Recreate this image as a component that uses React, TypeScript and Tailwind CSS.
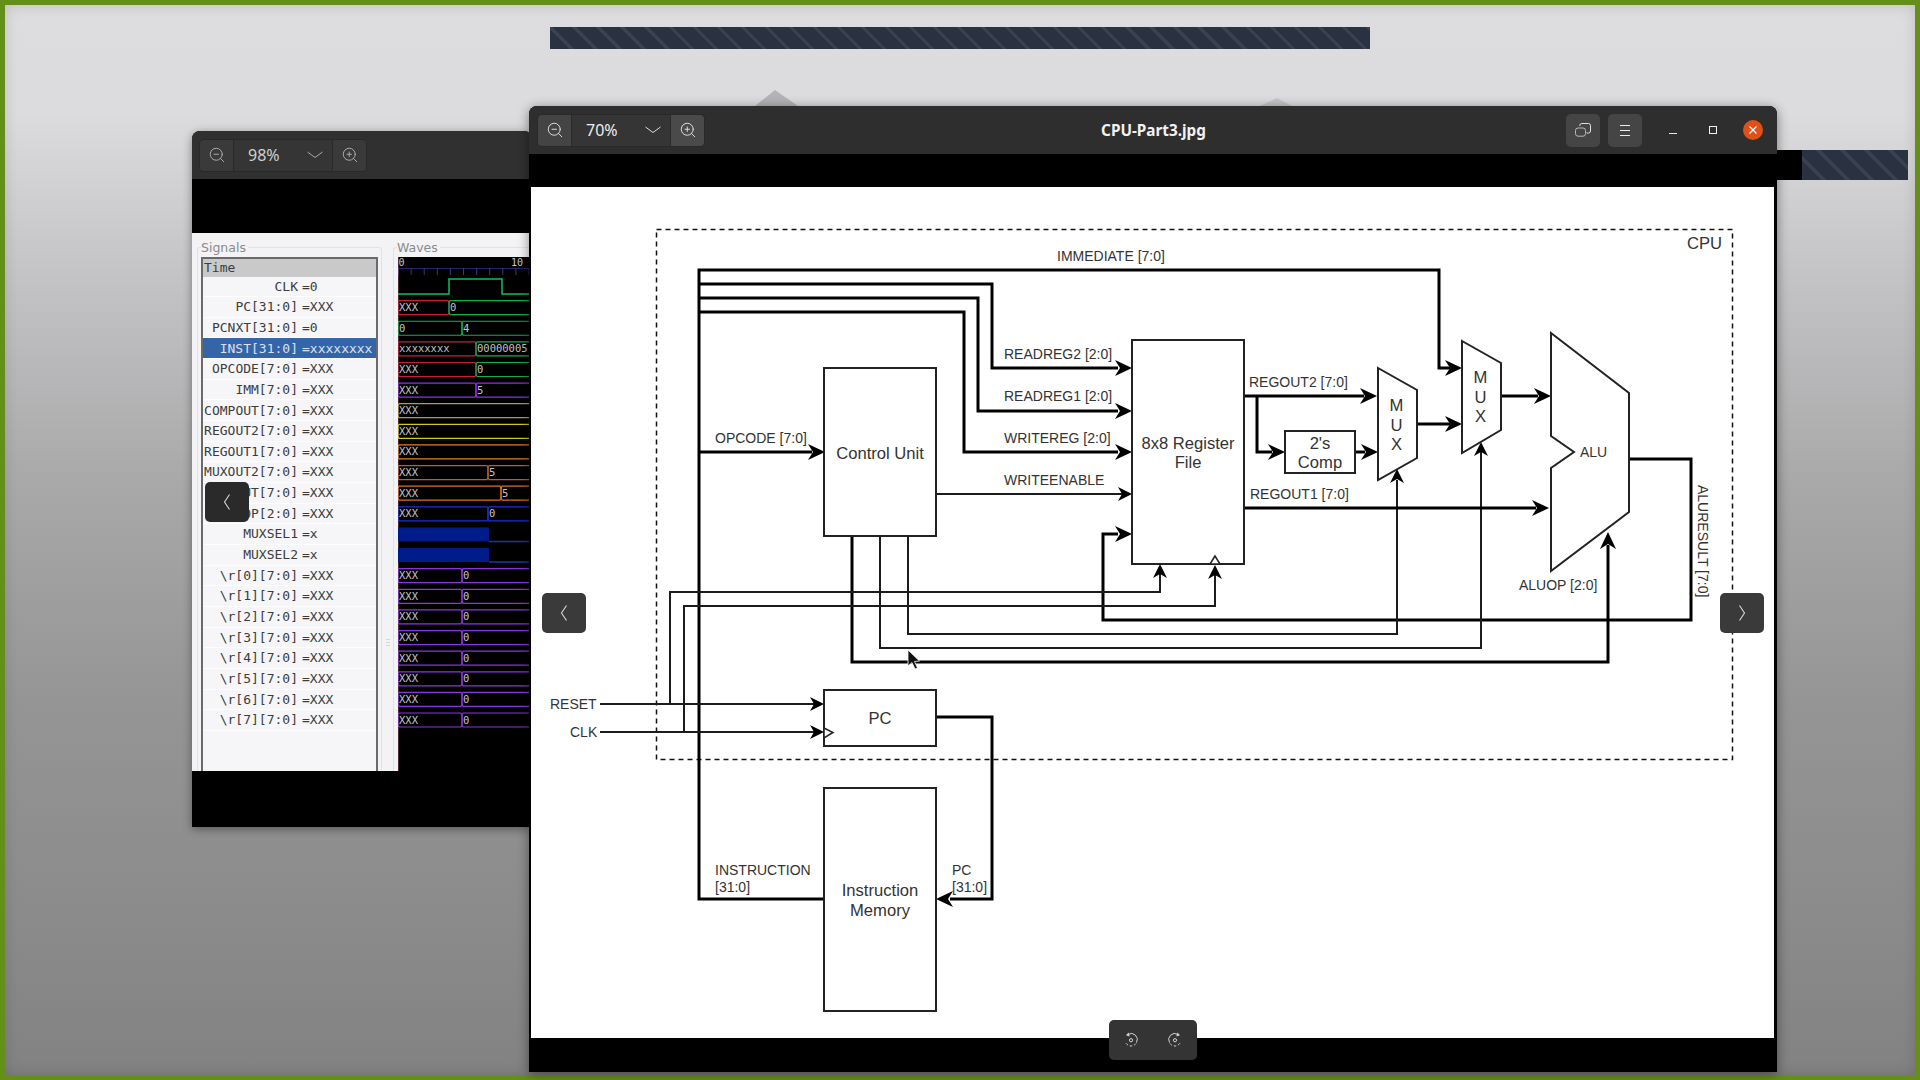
import { ZoomIn, ZoomOut } from "lucide-react";

const UI_FONT = "[font-family:'Noto_Sans',sans-serif]";

const signals = [
  ["CLK", "0"],
  ["PC[31:0]", "XXX"],
  ["PCNXT[31:0]", "0"],
  ["INST[31:0]", "xxxxxxxx"],
  ["OPCODE[7:0]", "XXX"],
  ["IMM[7:0]", "XXX"],
  ["COMPOUT[7:0]", "XXX"],
  ["REGOUT2[7:0]", "XXX"],
  ["REGOUT1[7:0]", "XXX"],
  ["MUXOUT2[7:0]", "XXX"],
  ["MUXOUT[7:0]", "XXX"],
  ["ALUOP[2:0]", "XXX"],
  ["MUXSEL1", "x"],
  ["MUXSEL2", "x"],
  ["\\r[0][7:0]", "XXX"],
  ["\\r[1][7:0]", "XXX"],
  ["\\r[2][7:0]", "XXX"],
  ["\\r[3][7:0]", "XXX"],
  ["\\r[4][7:0]", "XXX"],
  ["\\r[5][7:0]", "XXX"],
  ["\\r[6][7:0]", "XXX"],
  ["\\r[7][7:0]", "XXX"],
];

type Seg = { to: number; color: string; label: string };

const RED = "#c81e3c";
const GREEN = "#10b050";
const PURPLE = "#8a35e0";
const BLUE = "#1a30d8";

const buses: { row: number; segs: Seg[] }[] = [
  { row: 1, segs: [{ to: 449, color: RED, label: "XXX" }, { to: 540, color: GREEN, label: "0" }] },
  { row: 2, segs: [{ to: 462, color: GREEN, label: "0" }, { to: 540, color: GREEN, label: "4" }] },
  { row: 3, segs: [{ to: 476, color: RED, label: "xxxxxxxx" }, { to: 540, color: GREEN, label: "00000005" }] },
  { row: 4, segs: [{ to: 476, color: RED, label: "XXX" }, { to: 540, color: GREEN, label: "0" }] },
  { row: 5, segs: [{ to: 476, color: PURPLE, label: "XXX" }, { to: 540, color: PURPLE, label: "5" }] },
  { row: 6, segs: [{ to: 540, color: "#b0a040", label: "XXX" }] },
  { row: 7, segs: [{ to: 540, color: "#d2c820", label: "XXX" }] },
  { row: 8, segs: [{ to: 540, color: "#e08020", label: "XXX" }] },
  { row: 9, segs: [{ to: 488, color: "#b86030", label: "XXX" }, { to: 540, color: "#b86030", label: "5" }] },
  { row: 10, segs: [{ to: 501, color: "#e07020", label: "XXX" }, { to: 540, color: "#e07020", label: "5" }] },
  { row: 11, segs: [{ to: 488, color: BLUE, label: "XXX" }, { to: 540, color: BLUE, label: "0" }] },
  ...[14, 15, 16, 17, 18, 19, 20, 21].map((row) => ({
    row,
    segs: [
      { to: 462, color: PURPLE, label: "XXX" },
      { to: 540, color: PURPLE, label: "0" },
    ],
  })),
];

const rowY = (row: number) => 287 + row * 20.62;

function Waves() {
  const ticks = Array.from({ length: 11 }, (_, i) => 398 + i * 13.1);
  return (
    <svg width="132" height="514" viewBox="398 257 132 514" className="ml-px block bg-black [font-family:'DejaVu_Sans_Mono',monospace]">
      <text x="398.5" y="266" className="text-[10px] fill-[#c8c8c8]">0</text>
      <text x="511" y="266" className="text-[10px] fill-[#c8c8c8]">10</text>
      <line x1="398" y1="268.5" x2="530" y2="268.5" stroke="#24246a" />
      {ticks.map((x) => (
        <line key={x} x1={x} y1="268" x2={x} y2="275" stroke="#38387a" />
      ))}
      <line x1="398" y1="257" x2="398" y2="771" stroke="#e88ab0" strokeOpacity="0.6" />
      <polyline points="398,294 449,294 449,279 502,279 502,294 530,294" fill="none" stroke="#10c060" strokeWidth="1.5" />
      {buses.map(({ row, segs }) => {
        const cy = rowY(row);
        let from = 398;
        return segs.map((seg) => {
          const x0 = from;
          from = seg.to;
          return (
            <g key={`${row}-${seg.to}`}>
              <path
                d={`M${x0 + 1} ${cy - 7}H${seg.to - 1}L${seg.to} ${cy - 5}V${cy + 5}L${seg.to - 1} ${cy + 7}H${x0 + 1}L${x0} ${cy + 5}V${cy - 5}Z`}
                fill="none"
                stroke={seg.color}
                strokeWidth="1.2"
              />
              <text x={x0 + 1} y={cy + 3.5} className="text-[10.5px] fill-[#c4c4c4]">
                {seg.label}
              </text>
            </g>
          );
        });
      })}
      {[12, 13].map((row) => (
        <g key={row}>
          <rect x="398" y={rowY(row) - 7} width="91" height="14" fill="#001c8a" />
          <line x1="489" y1={rowY(row) + 7} x2="530" y2={rowY(row) + 7} stroke="#1438a8" strokeWidth="1.5" />
        </g>
      ))}
    </svg>
  );
}

function Magnifier({ kind, dim }: { kind: "in" | "out"; dim?: boolean }) {
  const Icon = kind === "in" ? ZoomIn : ZoomOut;
  return <Icon size={18} strokeWidth={1.25} className={dim ? "text-[#b0b0b0]" : "text-[#e4e4e4]"} />;
}

function Chevron({ dim }: { dim?: boolean }) {
  return (
    <svg width="16" height="8" viewBox="0 0 16 8" fill="none" stroke={dim ? "#a8a8a8" : "#dcdcdc"} strokeWidth="1">
      <path d="M0.5 1 8 6.5 15.5 1" />
    </svg>
  );
}

function ZoomGroup({ value, dim }: { value: string; dim?: boolean }) {
  return (
    <div className="flex h-[33px] w-[168px] shrink-0 overflow-hidden rounded-[5px] border border-[#292929]">
      <div className={`flex w-[34px] items-center justify-center border-r border-[#2a2a2a] ${dim ? "bg-[#3a3a3a]" : "bg-[#444444]"}`}>
        <Magnifier kind="out" dim={dim} />
      </div>
      <div className="flex flex-1 items-center justify-between bg-[#353535] pl-[14px] pr-[9px]">
        <span className={`-mt-px text-[16px] ${dim ? "text-[#d0d0d0]" : "text-[#ededed]"} ${UI_FONT}`}>{value}</span>
        <Chevron dim={dim} />
      </div>
      <div className={`flex w-[34px] items-center justify-center border-l border-[#2a2a2a] ${dim ? "bg-[#3a3a3a]" : "bg-[#4a4a4a]"}`}>
        <Magnifier kind="in" dim={dim} />
      </div>
    </div>
  );
}

function NavButton({ side, className }: { side: "left" | "right"; className: string }) {
  return (
    <div className={`absolute flex items-center justify-center rounded-[5px] ${className}`}>
      <svg width="8" height="16" viewBox="0 0 8 16" fill="none" stroke="#d8d8d8" strokeWidth="1.1">
        <path d={side === "left" ? "M6.5 0.5 1.5 8 6.5 15.5" : "M1.5 0.5 6.5 8 1.5 15.5"} />
      </svg>
    </div>
  );
}

function GimpWindow() {
  return (
    <div className="absolute left-[192px] top-[131px] flex h-[696px] w-[340px] flex-col overflow-hidden rounded-t-[8px] bg-black shadow-[0_2px_10px_rgba(0,0,0,0.4)]">
      <div className="flex h-[48px] shrink-0 items-center bg-[#303030] pl-[7px]">
        <ZoomGroup value="98%" dim />
      </div>
      <div className="h-[54px] shrink-0 bg-black" />
      <div className="flex h-[538px] shrink-0 bg-[#f3f3f5] pl-[5px] pt-[14px]">
        <div className="flex w-[185px] shrink-0 flex-col rounded-t-[3px] border-x border-t border-[#e2e2e4] px-[3px]">
          <span className="-mt-[10px] h-[19px] w-fit bg-[#f3f3f5] pr-[2px] text-[12.5px] leading-[20px] text-[#8a8a8a] [font-family:'DejaVu_Sans',sans-serif]">
            Signals
          </span>
          <div className="flex flex-1 flex-col border-x-2 border-t-2 border-x-[#6a6a6a] border-t-[#6a6a6a] bg-[#f6f6f8] text-[13px] text-[#3c3c3c] [font-family:'DejaVu_Sans_Mono',monospace]">
            <div className="flex h-[17.5px] shrink-0 items-center bg-[#c9c9c9] pl-[1px]">Time</div>
            {signals.map(([name, value], i) => (
              <div
                key={name}
                className={`flex h-[20.67px] shrink-0 items-center border-b border-[#fdfdfe] ${
                  i === 3 ? "bg-[#3465a8] text-[#d8e2f0]" : ""
                }`}
              >
                <span className="w-[95px] text-right">{name}</span>
                <span className="ml-[4px]">={value}</span>
              </div>
            ))}
          </div>
        </div>
        <div className="flex w-[11px] shrink-0 flex-col items-center gap-[2px] pt-[392px]">
          <div className="h-px w-[4px] bg-[#d6d6d8]" />
          <div className="h-px w-[4px] bg-[#d6d6d8]" />
          <div className="h-px w-[4px] bg-[#d6d6d8]" />
        </div>
        <div className="flex flex-1 flex-col rounded-t-[3px] border-l border-t border-[#e2e2e4] pl-[3px]">
          <span className="-mt-[10px] h-[19px] w-fit bg-[#f3f3f5] pr-[2px] text-[12.5px] leading-[20px] text-[#8a8a8a] [font-family:'DejaVu_Sans',sans-serif]">
            Waves
          </span>
          <Waves />
        </div>
      </div>
      <div className="flex-1 bg-black" />
      <NavButton side="left" className="left-[13px] top-[351px] h-[40px] w-[44px] bg-[#2a2a2a]" />
    </div>
  );
}

type Pt = [number, number];

function Wire({ pts, w = 3 }: { pts: Pt[]; w?: number }) {
  return (
    <polyline
      points={pts.map((p) => p.join(",")).join(" ")}
      fill="none"
      stroke={w === 3 ? "#000000" : "#1c1c1c"}
      strokeWidth={w}
    />
  );
}

function Head({ x, y, dir = 0, big = true }: { x: number; y: number; dir?: number; big?: boolean }) {
  return (
    <polygon
      transform={`translate(${x} ${y}) rotate(${dir})`}
      points={big ? "0,0 -17,-8 -12,0 -17,8" : "0,0 -14,-7 -10,0 -14,7"}
      fill="#000000"
    />
  );
}

function Label({ x, y, size = "text-[14px]", anchor, children }: { x: number; y: number; size?: string; anchor?: "middle" | "end"; children: string }) {
  return (
    <text x={x} y={y} textAnchor={anchor} className={`${size} fill-[#333333]`}>
      {children}
    </text>
  );
}

function Diagram() {
  return (
    <svg width="1243" height="851" viewBox="531 187 1243 851" className="block bg-white [font-family:'Liberation_Sans',sans-serif]">
      <rect x="656.5" y="229.5" width="1076" height="530" fill="none" stroke="#111111" strokeWidth="1.5" strokeDasharray="5 4" />

      <Wire pts={[[824, 899], [699, 899], [699, 270], [1439, 270], [1439, 368], [1450, 368]]} />
      <Head x={1462} y={368} />
      <Wire pts={[[699, 284], [992, 284], [992, 368], [1118, 368]]} />
      <Wire pts={[[699, 298], [978, 298], [978, 411], [1118, 411]]} />
      <Wire pts={[[699, 312], [964, 312], [964, 452], [1118, 452]]} />
      <Wire pts={[[699, 452], [812, 452]]} />
      <Head x={825} y={452} />
      <Head x={1132} y={368} />
      <Head x={1132} y={411} />
      <Head x={1132} y={452} />
      <Wire pts={[[936, 494], [1122, 494]]} w={2} />
      <Head x={1132} y={494} big={false} />

      <Wire pts={[[1118, 534], [1103, 534], [1103, 620], [1691, 620], [1691, 459], [1629, 459]]} />
      <Head x={1132} y={534} />

      <Wire pts={[[852, 536], [852, 662], [1608, 662], [1608, 545]]} />
      <Head x={1608} y={532} dir={-90} />
      <Wire pts={[[880, 536], [880, 648], [1481, 648], [1481, 452]]} w={2} />
      <Head x={1481} y={442} dir={-90} big={false} />
      <Wire pts={[[908, 536], [908, 634], [1397, 634], [1397, 480]]} w={2} />
      <Head x={1397} y={469} dir={-90} big={false} />

      <Wire pts={[[600, 704], [814, 704]]} w={2} />
      <Head x={824} y={704} big={false} />
      <Wire pts={[[600, 732], [814, 732]]} w={2} />
      <Head x={824} y={732} big={false} />
      <Wire pts={[[670, 704], [670, 592], [1160, 592], [1160, 574]]} w={2} />
      <Head x={1160} y={564} dir={-90} big={false} />
      <Wire pts={[[684, 732], [684, 606], [1215, 606], [1215, 575]]} w={2} />
      <Head x={1215} y={565} dir={-90} big={false} />

      <Wire pts={[[936, 717], [992, 717], [992, 899], [950, 899]]} />
      <Head x={936} y={899} dir={180} />

      <Wire pts={[[1244, 396], [1364, 396]]} />
      <Head x={1377} y={396} />
      <Wire pts={[[1257, 396], [1257, 452], [1272, 452]]} />
      <Head x={1285} y={452} />
      <Wire pts={[[1355, 452], [1365, 452]]} />
      <Head x={1378} y={452} />
      <Wire pts={[[1417, 424], [1450, 424]]} />
      <Head x={1462} y={424} />
      <Wire pts={[[1501, 396], [1538, 396]]} />
      <Head x={1551} y={396} />
      <Wire pts={[[1244, 508], [1536, 508]]} />
      <Head x={1549} y={508} />

      <g fill="#ffffff" stroke="#222222" strokeWidth="2">
        <rect x="824" y="368" width="112" height="168" />
        <rect x="1132" y="340" width="112" height="224" />
        <rect x="824" y="690" width="112" height="56" />
        <rect x="824" y="788" width="112" height="223" />
        <rect x="1285" y="431" width="70" height="42" />
        <polygon points="1378,368 1417,390 1417,458 1378,480" />
        <polygon points="1462,341 1501,363 1501,430 1462,453" />
        <polygon points="1551,333 1629,393 1629,512 1551,571 1551,468 1574,452 1551,436" />
      </g>
      <polygon points="1215,556 1210,564 1220,564" fill="#ffffff" stroke="#222222" strokeWidth="1.5" />
      <polygon points="824,728 833,732.5 824,738" fill="#ffffff" stroke="#222222" strokeWidth="1.5" />

      <Label x={1057} y={261}>IMMEDIATE [7:0]</Label>
      <Label x={1004} y={359}>READREG2 [2:0]</Label>
      <Label x={1004} y={401}>READREG1 [2:0]</Label>
      <Label x={1004} y={443}>WRITEREG [2:0]</Label>
      <Label x={1004} y={485}>WRITEENABLE</Label>
      <Label x={715} y={443}>OPCODE [7:0]</Label>
      <Label x={1249} y={387}>REGOUT2 [7:0]</Label>
      <Label x={1250} y={499}>REGOUT1 [7:0]</Label>
      <Label x={1519} y={590}>ALUOP [2:0]</Label>
      <Label x={1580} y={457}>ALU</Label>
      <Label x={550} y={709}>RESET</Label>
      <Label x={570} y={737}>CLK</Label>
      <Label x={715} y={875}>INSTRUCTION</Label>
      <Label x={715} y={892}>[31:0]</Label>
      <Label x={952} y={875}>PC</Label>
      <Label x={952} y={892}>[31:0]</Label>

      <Label x={880} y={459} size="text-[16.6px]" anchor="middle">Control Unit</Label>
      <Label x={1188} y={449} size="text-[16.6px]" anchor="middle">8x8 Register</Label>
      <Label x={1188} y={468} size="text-[16.6px]" anchor="middle">File</Label>
      <Label x={880} y={724} size="text-[16.6px]" anchor="middle">PC</Label>
      <Label x={880} y={896} size="text-[16.6px]" anchor="middle">Instruction</Label>
      <Label x={880} y={916} size="text-[16.6px]" anchor="middle">Memory</Label>
      <Label x={1320} y={449} size="text-[16.6px]" anchor="middle">2's</Label>
      <Label x={1320} y={468} size="text-[16.6px]" anchor="middle">Comp</Label>
      <Label x={1396.5} y={411} size="text-[16.6px]" anchor="middle">M</Label>
      <Label x={1396.5} y={431} size="text-[16.6px]" anchor="middle">U</Label>
      <Label x={1396.5} y={450} size="text-[16.6px]" anchor="middle">X</Label>
      <Label x={1480.5} y={383} size="text-[16.6px]" anchor="middle">M</Label>
      <Label x={1480.5} y={403} size="text-[16.6px]" anchor="middle">U</Label>
      <Label x={1480.5} y={422} size="text-[16.6px]" anchor="middle">X</Label>
      <Label x={1722} y={249} size="text-[16.6px]" anchor="end">CPU</Label>
      <text transform="translate(1698 485) rotate(90)" className="text-[14px] fill-[#333333]">ALURESULT [7:0]</text>

      <polygon points="908,650 908,666 912,662.5 915,669 917.5,668 914.5,661.5 919.5,661" fill="#111111" stroke="#ffffff" strokeWidth="0.8" />
    </svg>
  );
}

function RotateIcon({ flip }: { flip?: boolean }) {
  return (
    <svg width="16" height="16" viewBox="0 0 16 16" fill="none" stroke="#d4d4d4" strokeWidth="1" className={flip ? "-scale-x-100" : ""}>
      <path d="M5 2.5A6 6 0 0 1 13.5 10.5" />
      <path d="M13 11.5A6 6 0 0 1 2.3 9.5" strokeDasharray="2.5 2" />
      <circle cx="8" cy="8.2" r="1.6" />
      <path d="M5.6 0.5 3 3.2 6.6 4.5Z" fill="#d4d4d4" stroke="none" />
    </svg>
  );
}

function ImageWindow() {
  return (
    <div className="absolute left-[529px] top-[106px] flex h-[966px] w-[1248px] flex-col overflow-hidden rounded-t-[8px] bg-black shadow-[0_2px_12px_rgba(0,0,0,0.45)]">
      <div className="flex h-[48px] shrink-0 items-center bg-[#2e2e2e] pl-[8px] pr-[4px]">
        <ZoomGroup value="70%" />
        <div className={`flex-1 pl-[36px] text-center text-[15.3px] font-bold text-[#f2f2f2] ${UI_FONT}`}>CPU-Part3.jpg</div>
        <div className="flex h-[33px] w-[34px] items-center justify-center rounded-[5px] bg-[#454545]">
          <svg width="16" height="14" viewBox="0 0 16 14" fill="none" strokeWidth="1">
            <rect x="0.5" y="5" width="10" height="8.2" rx="2.5" stroke="#b8b8b8" />
            <path d="M4.8 3V2.5A2 2 0 0 1 6.8 .5H13.5A2 2 0 0 1 15.5 2.5V8A2 2 0 0 1 13.5 10H11.5" stroke="#e0e0e0" />
          </svg>
        </div>
        <div className="ml-[8px] flex h-[33px] w-[34px] items-center justify-center rounded-[5px] bg-[#454545]">
          <svg width="12" height="11" viewBox="0 0 12 11" stroke="#ececec" strokeWidth="1">
            <path d="M1 .5H11M1 5.5H11M1 10.5H11" />
          </svg>
        </div>
        <div className="ml-[11px] flex h-[40px] w-[40px] items-center justify-center pt-[6px]">
          <div className="h-px w-[8px] bg-[#e8e8e8]" />
        </div>
        <div className="flex h-[40px] w-[40px] items-center justify-center">
          <div className="h-[8px] w-[8px] border border-[#f0f0f0]" />
        </div>
        <div className="flex h-[40px] w-[40px] items-center justify-center">
          <div className="flex h-[20px] w-[20px] items-center justify-center rounded-full bg-[#e2501a]">
            <svg width="8" height="8" viewBox="0 0 8 8" stroke="#ffffff" strokeWidth="1.2">
              <path d="M.5 .5 7.5 7.5M7.5 .5 .5 7.5" />
            </svg>
          </div>
        </div>
      </div>
      <div className="h-[33px] shrink-0 bg-black" />
      <div className="ml-[2px] h-[851px] w-[1243px] shrink-0">
        <Diagram />
      </div>
      <NavButton side="left" className="left-[13px] top-[487px] h-[40px] w-[44px] bg-[#3a3a3a]" />
      <NavButton side="right" className="left-[1191px] top-[487px] h-[40px] w-[44px] bg-[#3a3a3a]" />
      <div className="absolute left-[580px] top-[914px] flex h-[40px] w-[88px] items-center justify-center gap-[28px] rounded-[5px] bg-[#343434]">
        <RotateIcon />
        <RotateIcon flip />
      </div>
    </div>
  );
}

const STRIPES =
  "bg-[repeating-linear-gradient(45deg,#2a3242_0,#2a3242_14px,#3a4251_14px,#3a4251_17px)]";

export default function App() {
  return (
    <div className="relative h-[1080px] w-[1920px] overflow-hidden bg-[#64901a] p-[5px]">
      <div className="h-full w-full bg-[linear-gradient(180deg,#dddddf_0%,#dcdcde_10%,#c4c4c6_25%,#a8a8a9_45%,#959596_65%,#8b8b8c_85%,#828283_100%)] shadow-[inset_0_0_14px_rgba(0,0,0,0.14)]" />
      <svg width="620" height="40" viewBox="0 0 620 40" className="absolute left-[720px] top-[80px]">
        <polygon points="35,26 55,10 78,26" fill="#b4b4b6" />
        <polygon points="540,26 557,18 572,26" fill="#c6c6c8" />
      </svg>
      <div className={`absolute left-[550px] top-[27px] h-[22px] w-[820px] ${STRIPES}`} />
      <div className="absolute left-[1777px] top-[150px] flex h-[30px] w-[131px]">
        <div className="w-[25px] bg-black" />
        <div className={`flex-1 ${STRIPES}`} />
      </div>
      <GimpWindow />
      <ImageWindow />
    </div>
  );
}
